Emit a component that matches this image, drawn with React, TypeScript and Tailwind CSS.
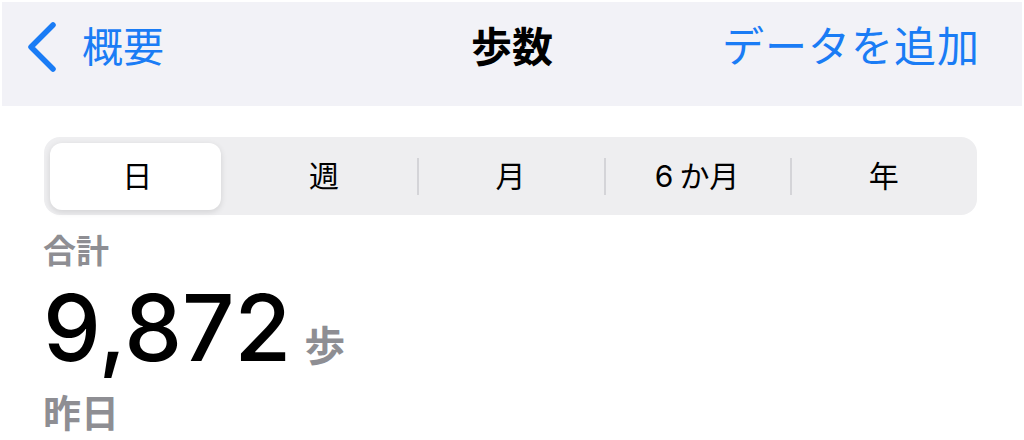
const segments = ["日", "週", "月", "6か月", "年"];

export default function App() {
  const selected = 0;

  return (
    <div
      className="w-[1024px] h-[440px] bg-white overflow-hidden border-t-2 border-x-2 border-white"
      style={{ fontFamily: 'Inter, "Noto Sans CJK JP", sans-serif' }}
    >
      {/* Nav bar */}
      <div className="h-[104px] bg-[#f2f2f7] grid grid-cols-[1fr_auto_1fr] items-start pt-[16px] px-[22px]">
        <div className="flex items-center text-[#1a7cf5]">
          <svg width="34" height="56" viewBox="0 0 34 56" className="ml-[1px]">
            <polyline
              points="28,6 6,28 28,50"
              fill="none"
              stroke="currentColor"
              strokeWidth="5.5"
              strokeLinecap="round"
              strokeLinejoin="round"
            />
          </svg>
          <span className="ml-[23px] text-[41px] leading-[58px]">概要</span>
        </div>
        <div className="text-[41px] leading-[58px] font-bold text-black">歩数</div>
        <div className="text-right text-[42px] leading-[58px] text-[#1a7cf5] pr-[20px] tracking-[1px]">データを追加</div>
      </div>

      {/* Segmented control */}
      <div className="mt-[31px] ml-[42px] w-[933px] h-[78px] rounded-[16px] bg-[#eeeef0] flex items-center">
        {segments.map((label, i) => (
          <div key={label} className="relative flex-1 h-full flex items-center justify-center">
            {i === selected && (
              <div className="absolute left-[6px] right-[10px] top-[6px] bottom-[5px] rounded-[12px] bg-white shadow-[0_2px_6px_rgba(0,0,0,0.12)]" />
            )}
            {i > 1 && (
              <div className="absolute left-0 top-[21px] bottom-[20px] w-[2px] bg-[#d4d4d8]" />
            )}
            {label === "6か月" ? (
              <span className="relative text-[30px] text-black">
                <span className="mr-[6px]">6</span>か月
              </span>
            ) : (
              <span className="relative text-[30px] text-black">{label}</span>
            )}
          </div>
        ))}
      </div>

      {/* Summary */}
      <div className="pl-[41px] pt-[16px]">
        <div className="text-[33px] leading-[40px] font-semibold text-[#8e8e93]">合計</div>
        <div className="flex items-baseline mt-[14px]">
          <span className="text-[92px] leading-[86px] font-medium text-black">9,872</span>
          <span className="ml-[13px] text-[41px] font-semibold text-[#8e8e93]">歩</span>
        </div>
        <div className="mt-[12px] text-[38px] leading-[46px] font-semibold text-[#8e8e93]">昨日</div>
      </div>
    </div>
  );
}
